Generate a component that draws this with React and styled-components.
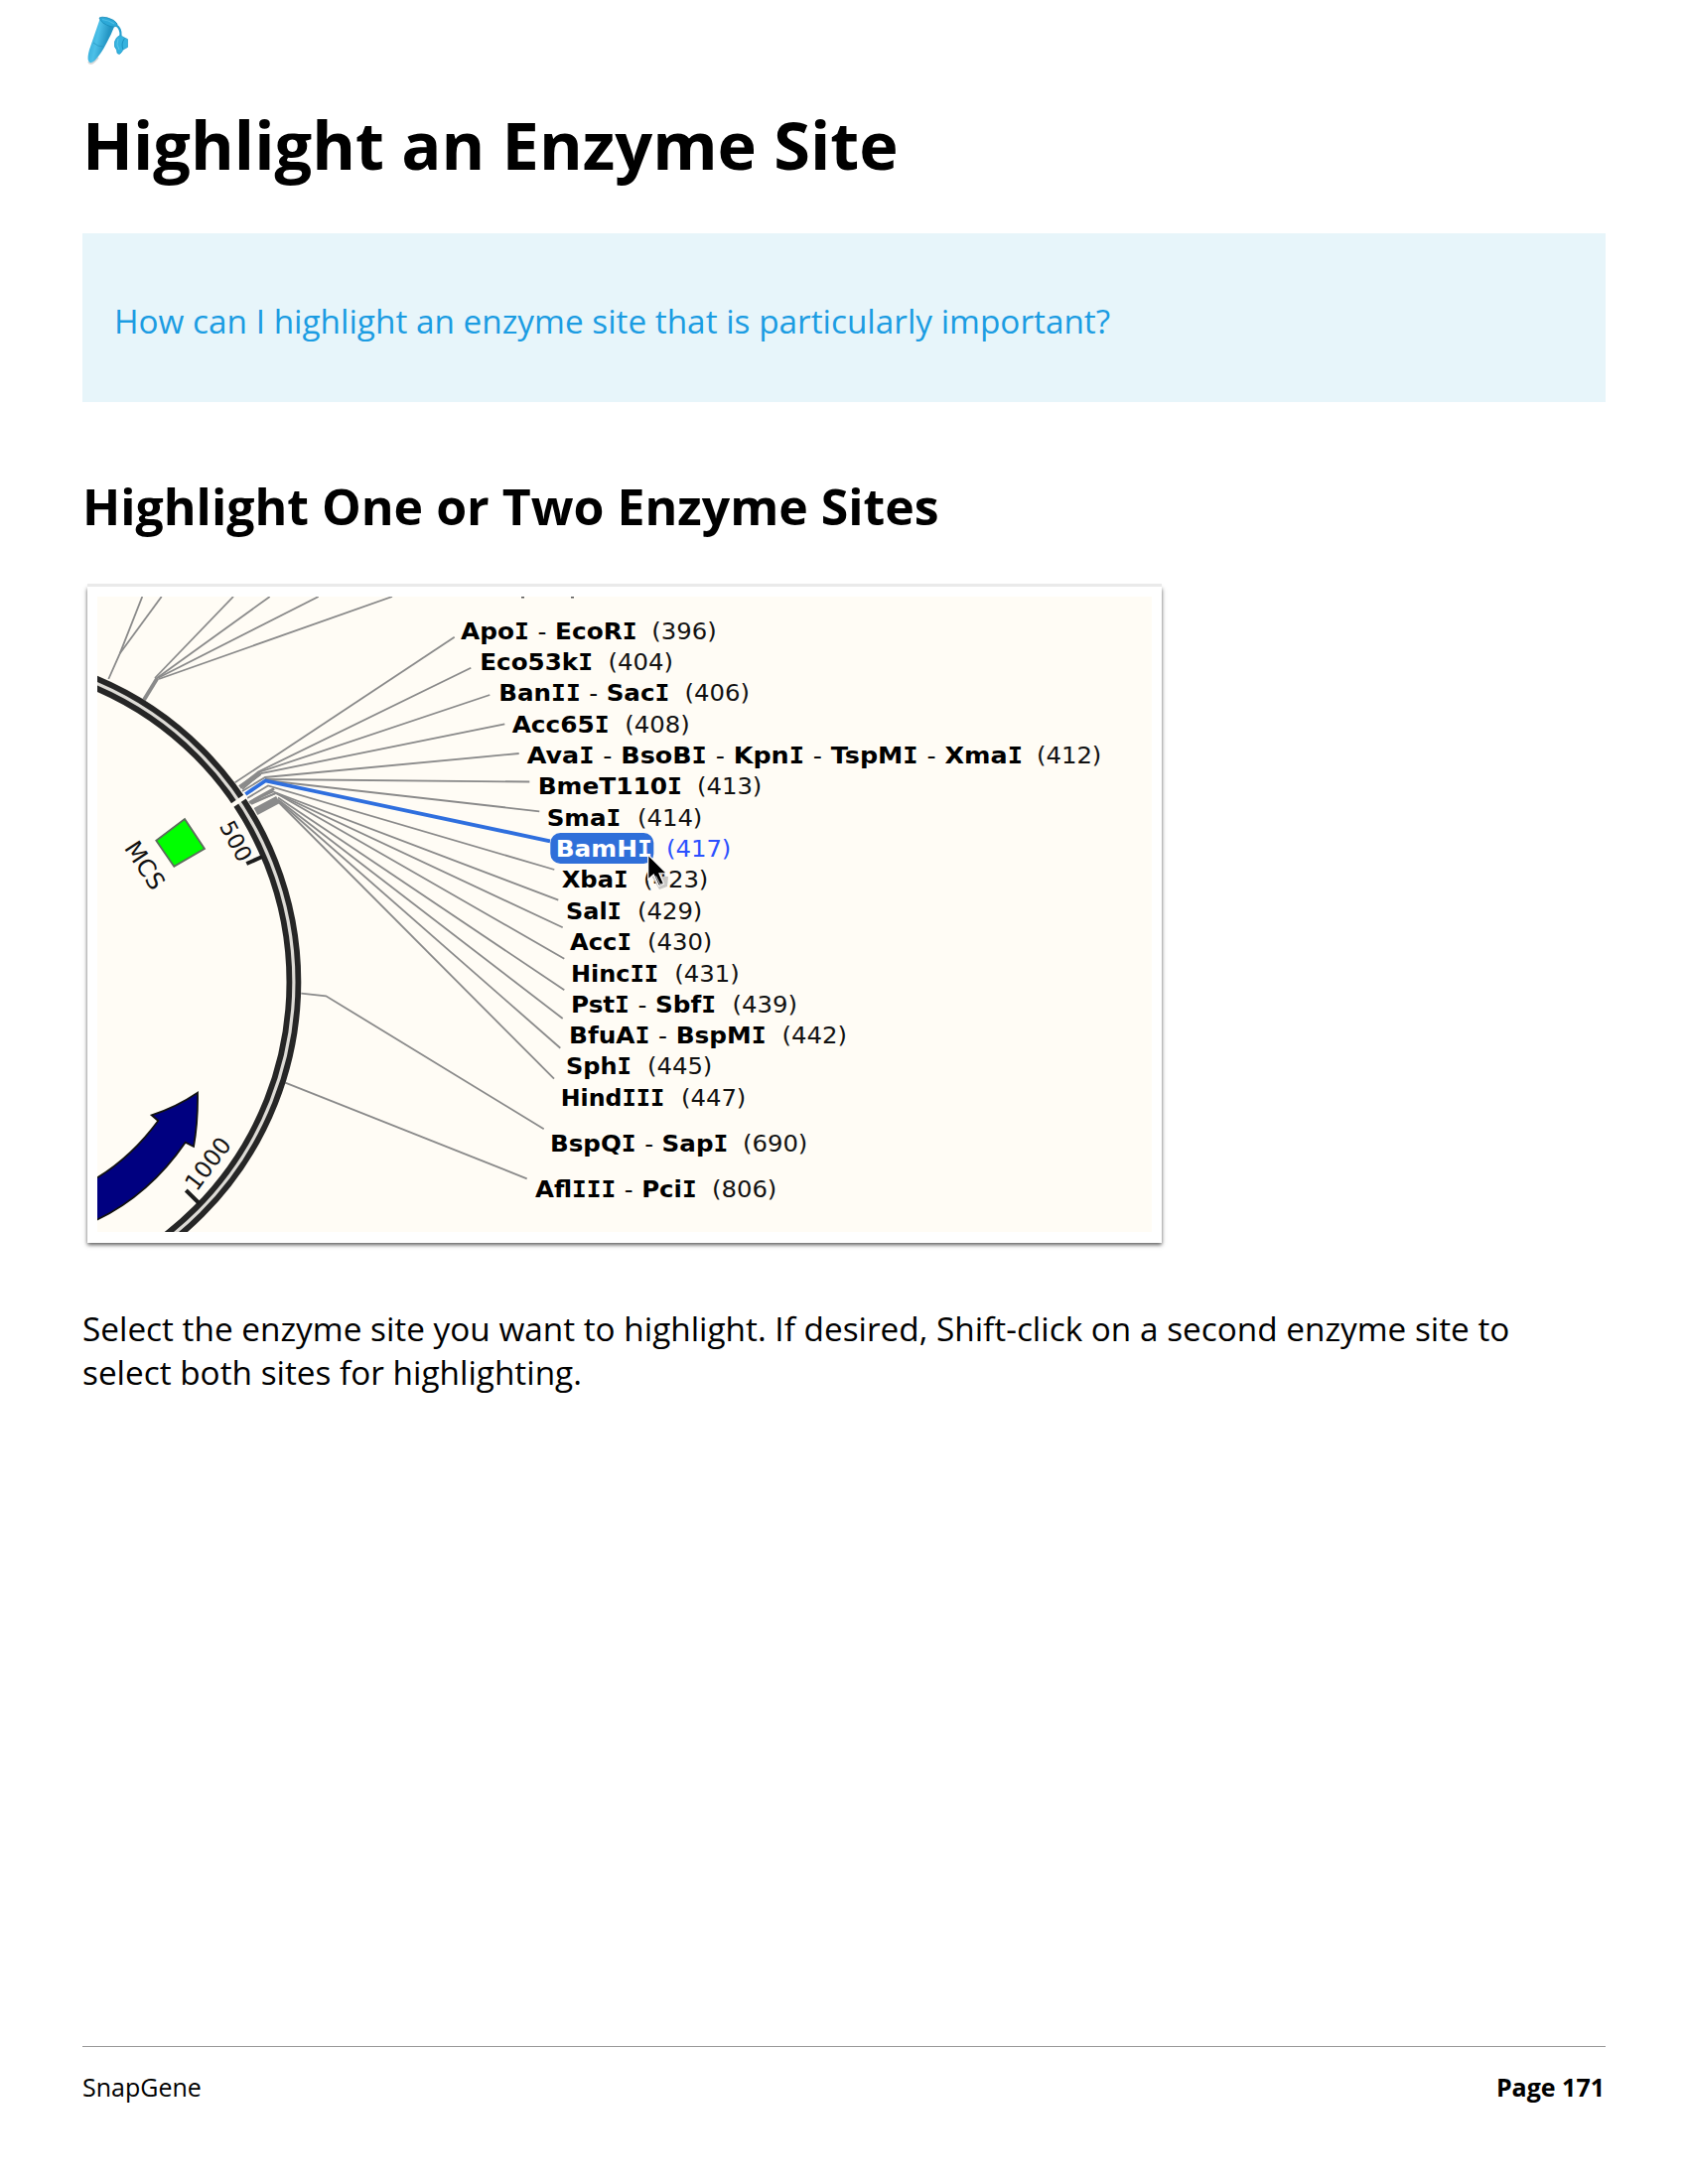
import React from "react";
import styled, { createGlobalStyle } from "styled-components";

const GlobalStyle = createGlobalStyle`
  body { margin: 0; background: #fff; }
`;

const Page = styled.main`
  box-sizing: border-box;
  display: flex;
  flex-direction: column;
  width: 1700px;
  height: 2200px;
  padding: 0 83px;
  background: #fff;
  color: #000;
  font-family: "Open Sans", "Noto Sans", sans-serif;
`;

const Header = styled.header`
  height: 101px;
  flex: none;
`;

const Title = styled.h1`
  margin: 0;
  font-size: 66.67px;
  line-height: 90px;
  font-weight: 700;
`;

const Callout = styled.section`
  display: flex;
  align-items: center;
  box-sizing: border-box;
  height: 170px;
  margin-top: 44px;
  padding: 6px 32px 0;
  background: #e7f5fa;
  color: #1b9ce2;
  font-size: 33.33px;
  line-height: 44px;
`;

const SectionTitle = styled.h2`
  margin: 71px 0 0;
  font-size: 50px;
  line-height: 68px;
  font-weight: 700;
`;

const Figure = styled.figure`
  box-sizing: border-box;
  width: 1082px;
  height: 661px;
  flex: none;
  margin: 47px 0 0 5px;
  padding: 10px;
  background: #fff;
  box-shadow: 0 -3px 0 #eaeaea, 0 2px 4px rgba(0, 0, 0, 0.65);
`;

const MapSvg = styled.svg`
  display: block;
  width: 1062px;
  height: 640px;
  background: #fffcf5;
  font-family: "DejaVu Sans", sans-serif;
  font-size: 22.6px;
`;

const Name = styled.text`
  font-weight: 700;
  fill: ${(p) => (p.$selected ? "#fff" : "#000")};
`;

const SerifI = styled.tspan`
  font-family: "DejaVu Sans Mono", monospace;
`;

const Dash = styled.tspan`
  font-weight: 400;
`;

const Position = styled.text`
  fill: ${(p) => (p.$selected ? "#2b50ff" : "#111")};
`;

const Paragraph = styled.p`
  margin: 64px 0 0;
  font-size: 33.33px;
  line-height: 44px;
`;

const Footer = styled.footer`
  display: flex;
  justify-content: space-between;
  box-sizing: border-box;
  height: 139px;
  margin-top: auto;
  padding: 23px 1px 0 0;
  border-top: 1px solid #999;
  font-size: 25px;
  line-height: 34px;
`;

const PageNumber = styled.strong`
  font-weight: 700;
`;

/* name, name start, name end, number, number start, baseline */
const sites = [
  ["ApoI - EcoRI", 465, 640.7, 396, 657.7, 644],
  ["Eco53kI", 484.3, 596, 404, 614, 675.4],
  ["BanII - SacI", 503.3, 673.3, 406, 691, 706.7],
  ["Acc65I", 516.7, 612.7, 408, 630.7, 738],
  ["AvaI - BsoBI - KpnI - TspMI - XmaI", 531.7, 1029, 412, 1045.3, 769.4],
  ["BmeT110I", 542.7, 686, 413, 703.3, 800.6],
  ["SmaI", 551.7, 624.3, 414, 643.3, 832],
  ["BamHI", 560.7, 656, 417, 672.3, 863.2],
  ["XbaI", 566.7, 631.7, 423, 649.3, 894.5],
  ["SalI", 571, 625, 429, 643.3, 926],
  ["AccI", 575, 635, 430, 653.3, 957.5],
  ["HincII", 576, 662.3, 431, 680.7, 989],
  ["PstI - SbfI", 576, 720, 439, 739, 1020],
  ["BfuAI - BspMI", 574, 770.7, 442, 789, 1051.5],
  ["SphI", 571, 635, 445, 653.3, 1082.7],
  ["HindIII", 565.7, 668.3, 447, 687.3, 1114],
  ["BspQI - SapI", 555, 732.3, 690, 749.3, 1160],
  ["AflIII - PciI", 540, 700.7, 806, 718.3, 1206],
];

const leaders = [
  "109.3,684 120.7,658.3 143.3,601",
  "120.7,658.3 162.7,601",
  "156,683 235,601",
  "158,683 271.7,601",
  "159,683 320.7,601",
  "160,684 395,601",
  "236.7,788.3 457.7,641.7",
  "242,792 260,777.5 474.3,672.7",
  "243,793 262,777.5 493.3,700",
  "244,795 263,779 508.3,729.3",
  "244,797 267,783 522.7,759",
  "267,785 533.3,787.5",
  "267,786 543.3,817.3",
  "249,804 270,791.5 558.3,876",
  "252,808 275,797.5 562.3,906.7",
  "252,809 278,799 566.7,934.3",
  "253,810 278,799 568.3,965.7",
  "280,803.5 568.3,997.3",
  "280,805.5 566.7,1026",
  "280,806.5 564.3,1055.7",
  "280,807.5 558,1086.7",
  "303.3,1000.7 328.3,1003.3 547.7,1137.3",
  "287.3,1090.7 530.7,1187.3",
];

function SiteLabel({ site }) {
  const [name, start, end, pos, posStart, baseline] = site;
  const selected = pos === 417;
  const y = baseline - 0.4;
  return (
    <>
      <Name
        $selected={selected}
        x={start - 1}
        y={y}
        textLength={end - start + 2}
        lengthAdjust="spacingAndGlyphs"
      >
        {name.split(/(I+|-)/).map((part, i) => {
          if (part === "-") return <Dash key={i}>-</Dash>;
          if (part.startsWith("I")) return <SerifI key={i}>{part}</SerifI>;
          return part;
        })}
      </Name>
      <Position
        $selected={selected}
        x={posStart - 1.4}
        y={y}
        textLength={65.5}
        lengthAdjust="spacingAndGlyphs"
      >
        ({pos})
      </Position>
    </>
  );
}

function TubeIcon() {
  return (
    <svg width="60" height="80" viewBox="83 0 60 80" aria-hidden="true">
      <defs>
        <linearGradient id="tube" x1="0" y1="0" x2="1" y2="0.35">
          <stop offset="0.1" stopColor="#2fa9d6" />
          <stop offset="0.45" stopColor="#4cc0e8" />
          <stop offset="0.8" stopColor="#2496c4" />
        </linearGradient>
      </defs>
      <path d="M89 62 Q91 66 95 62 L99 58" fill="none" stroke="#d8d8d8" strokeWidth="2" />
      <path
        d="M100.5 19.5 L90 50 Q87.500 59 89.200 61.500 Q91 65 95.500 61 Q102 54 107 44 Q112 35 115 27 Z"
        fill="url(#tube)"
      />
      <path d="M94 43 Q98 47 104.500 47" fill="none" stroke="#2795c2" strokeWidth="0.8" />
      <path
        d="M100 18 Q102 16.500 108 17.800 Q116 20 118 24 Q118.500 27.500 112 26.800 Q102 24 100 18 Z"
        fill="#2da9d8"
        stroke="#168ab8"
        strokeWidth="0.8"
      />
      <path d="M103 19.500 Q110 20.500 115 24" fill="none" stroke="#4fbfe6" strokeWidth="1.200" />
      <path d="M117 25.500 Q122 28.500 121.500 36" fill="none" stroke="#259fce" strokeWidth="2.200" />
      <path
        d="M121 35.500 Q117 37 115.500 42 Q114.500 48 117.500 50 L118 53.500 Q120.500 56 122.500 52.500 L124 50 L128.500 47.500 V39.500 L125.500 38 Z"
        fill="#35b3df"
        stroke="#209ac8"
        strokeWidth="0.7"
      />
      <path d="M125.500 38.500 Q121.500 44 124 50" fill="none" stroke="#1c91bf" strokeWidth="1" />
      <path d="M119 39 Q116.500 45 120 50" fill="none" stroke="#5cc6ea" strokeWidth="1" />
    </svg>
  );
}

function PlasmidMap() {
  return (
    <MapSvg viewBox="98 601 1062 640">
      <g fill="none" stroke="#8a8a8a" strokeWidth="1.800">
        {leaders.map((points) => (
          <polyline key={points} points={points} />
        ))}
        <path d="M145 705 L158.500 683" strokeWidth="4" />
        <path d="M241.500 793 L262 779" strokeWidth="4.500" />
        <path d="M251 808.500 L276 794.500" strokeWidth="3" />
        <path d="M257.500 817.500 L280 805.500" strokeWidth="8" />
        <path d="M525 601.500 h3 M575 601.500 h3" stroke="#555" />
      </g>

      <g fill="none">
        <circle cx="-31" cy="989.200" r="327" stroke="#dddbd6" strokeWidth="5" />
        <circle cx="-31" cy="989.200" r="331.400" stroke="#262626" strokeWidth="5.800" />
        <circle cx="-31" cy="989.200" r="322.400" stroke="#262626" strokeWidth="5.800" />
        <path d="M231.300 813 L248 801.700" stroke="#fffcf5" strokeWidth="4.500" />
        <path d="M247.300 800 L267.300 786.500 L554 847.300" stroke="#2f6fde" strokeWidth="3.800" />
        <path d="M248.300 870 L264 863" stroke="#1c1c1c" strokeWidth="4" />
        <path d="M187.300 1199 L201 1212.500" stroke="#1c1c1c" strokeWidth="4" />
      </g>

      <path
        d="M186 825 L206 855 L175.300 872.700 L157.300 846.700 Z"
        fill="#00ff00"
        stroke="#5d6a5d"
        strokeWidth="1.800"
      />
      <path
        d="M96 1187.500 Q132 1166 159.300 1129 L152.700 1123.300 Q178 1115 199 1100.700 Q199.500 1130 195 1155 L186.700 1150.700 Q150 1204 96 1229.500 Z"
        fill="#000080"
        stroke="#111"
        strokeWidth="1.800"
      />

      <g fill="#111">
        <text transform="translate(124.500 854) rotate(57)" fontSize="24">MCS</text>
        <text transform="translate(220.500 832) rotate(62)" fontSize="22.500">500</text>
        <text transform="translate(198 1201) rotate(-53)" fontSize="23.500">1000</text>
      </g>

      <rect x="554.300" y="839" width="104" height="31" rx="10" fill="#2f6fd9" />
      {sites.map((site) => (
        <SiteLabel key={site[0]} site={site} />
      ))}

      <path d="M656 882 L664 896 L672 893 L673 883 Z" fill="#c9c7c4" />
      <path
        d="M652.700 861 V886 L658.300 881 L663.500 892.500 L668.500 890.300 L664 879.800 H671.500 Z"
        fill="#000"
        stroke="#fff"
        strokeWidth="1.200"
      />
      <path d="M660.500 882.500 L664.800 891 L667 890" fill="none" stroke="#aaa" strokeWidth="1.200" />
    </MapSvg>
  );
}

export default function App() {
  return (
    <>
      <GlobalStyle />
      <Page>
        <Header>
          <TubeIcon />
        </Header>
        <Title>Highlight an Enzyme Site</Title>
        <Callout>How can I highlight an enzyme site that is particularly important?</Callout>
        <SectionTitle>Highlight One or Two Enzyme Sites</SectionTitle>
        <Figure>
          <PlasmidMap />
        </Figure>
        <Paragraph>
          Select the enzyme site you want to highlight. If desired, Shift-click on a second enzyme site to
          select both sites for highlighting.
        </Paragraph>
        <Footer>
          <span>SnapGene</span>
          <PageNumber>Page 171</PageNumber>
        </Footer>
      </Page>
    </>
  );
}
